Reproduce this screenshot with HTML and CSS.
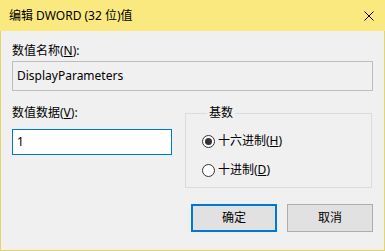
FILE: index.html
```html
<!DOCTYPE html>
<html lang="zh-CN">
<head>
<meta charset="utf-8">
<title>编辑 DWORD (32 位)值</title>
<link rel="stylesheet" href="styles.css">
</head>
<body>
<div class="window">
  <div class="titlebar">
    <span class="title">编辑 DWORD (32 位)值</span>
    <span class="close">
      <svg width="10" height="10" viewBox="0 0 10 10"><path d="M0.5 0.5L9.5 9.5M9.5 0.5L0.5 9.5" stroke="#000" stroke-width="1" fill="none"/></svg>
    </span>
  </div>
  <div class="content">
    <div class="label first">数值名称(<u>N</u>):</div>
    <div class="namebox">DisplayParameters</div>
    <div class="middle">
      <div class="datacol">
        <div class="label">数值数据(<u>V</u>):</div>
        <div class="databox">1</div>
      </div>
      <fieldset class="group">
        <legend>基数</legend>
        <div class="radio"><span class="circle checked"></span><span>十六进制(<u>H</u>)</span></div>
        <div class="radio second"><span class="circle"></span><span>十进制(<u>D</u>)</span></div>
      </fieldset>
    </div>
    <div class="buttons">
      <div class="btn default">确定</div>
      <div class="btn">取消</div>
    </div>
  </div>
</div>
</body>
</html>
```
FILE: styles.css
```css
html, body {
  margin: 0;
  padding: 0;
  background: #f0f0f0;
}
body {
  font-family: "Noto Sans", "Noto Sans CJK SC", sans-serif;
  font-size: 12px;
  line-height: 16px;
  color: #000;
}
.window {
  width: 385px;
  height: 251px;
  display: flex;
  flex-direction: column;
}
.titlebar {
  height: 31px;
  background: #fae97f;
  display: flex;
  align-items: center;
  padding: 0 11px 0 9px;
  flex-shrink: 0;
}
.title {
  flex: 1;
  white-space: nowrap;
}
.close {
  display: flex;
  width: 10px;
  height: 10px;
}
.content {
  flex: 1;
  border: 1px solid #e4d46c;
  border-top: none;
  padding: 0 11px 0 11px;
  background: #f0f0f0;
}
.label {
  height: 16px;
  white-space: nowrap;
}
.label.first {
  margin-top: 12px;
}
.namebox {
  margin-top: 2px;
  height: 30px;
  box-sizing: border-box;
  border: 1px solid #bdbdbd;
  background: #f0f0f0;
  padding: 6px 4px 0 4px;
}
.middle {
  margin-top: 14px;
  display: grid;
  grid-template-columns: 160px 187px;
  column-gap: 13px;
  align-items: start;
}
.databox {
  margin-top: 8px;
  height: 26px;
  box-sizing: border-box;
  border: 1px solid #0078d7;
  background: #fff;
  padding: 4px 4px 0 4px;
}
.group {
  margin: 0;
  padding: 12px 0 9px 16px;
  border: 1px solid #dcdcdc;
  min-width: 0;
  height: 83px;
  box-sizing: border-box;
}
.group legend {
  padding: 0 2px;
  margin-left: 5px;
  line-height: 16px;
}
.radio {
  display: flex;
  align-items: center;
  gap: 3px;
  height: 16px;
}
.radio.second {
  margin-top: 13px;
}
.circle {
  width: 13px;
  height: 13px;
  box-sizing: border-box;
  border: 1px solid #333;
  border-radius: 50%;
  background: #fff;
  display: flex;
  align-items: center;
  justify-content: center;
}
.circle.checked::after {
  content: "";
  width: 7px;
  height: 7px;
  border-radius: 50%;
  background: #333;
}
.buttons {
  margin-top: 16px;
  display: flex;
  justify-content: flex-end;
  gap: 10px;
}
.btn {
  width: 86px;
  height: 28px;
  box-sizing: border-box;
  border: 1px solid #adadad;
  background: #e1e1e1;
  display: flex;
  align-items: center;
  justify-content: center;
}
.btn.default {
  border: 2px solid #0078d7;
}
```
